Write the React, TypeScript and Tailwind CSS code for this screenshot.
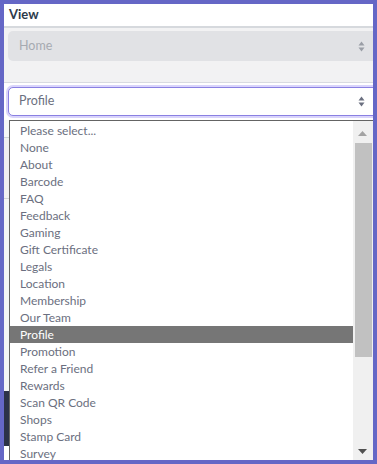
import React from "react"

const options = [
  "Please select...",
  "None",
  "About",
  "Barcode",
  "FAQ",
  "Feedback",
  "Gaming",
  "Gift Certificate",
  "Legals",
  "Location",
  "Membership",
  "Our Team",
  "Profile",
  "Promotion",
  "Refer a Friend",
  "Rewards",
  "Scan QR Code",
  "Shops",
  "Stamp Card",
  "Survey",
]

function SortIcon({ color }: { color: string }) {
  return (
    <svg width="7" height="11" viewBox="0 0 7 11" className="shrink-0">
      <path d="M3.5 0.5 L6.5 4.5 H0.5 Z" fill={color} />
      <path d="M3.5 10.5 L6.5 6.5 H0.5 Z" fill={color} />
    </svg>
  )
}

export default function App() {
  const selected = "Profile"

  return (
    <div
      className="w-[377px] h-[464px] bg-[#6567c6] p-[4px]"
      style={{ fontFamily: "Lato, 'Noto Sans', sans-serif" }}
    >
      <div className="relative w-full h-full bg-white overflow-hidden">
        <div className="h-[22px] px-[5px] flex items-center text-[13px] font-bold text-[#2d3a4b]">
          View
        </div>
        <div className="border-t-2 border-[#d6d9dd] bg-[#f2f2f3] h-[56px] pt-[3px] pl-[4px]">
          <div className="w-[380px] h-[30px] rounded-[5px] bg-[#e1e2e5] flex items-center justify-between pl-[11px] pr-[23px] text-[12.5px] text-[#a6aab1]">
            <span>Home</span>
            <SortIcon color="#9a9ea6" />
          </div>
        </div>
        <div className="border-t border-[#d8dae0] pt-[4px] pl-[4px] pb-[4px]">
          <div className="w-[380px] h-[29px] rounded-[5px] bg-white border border-[#8a80e2] shadow-[0_0_0_2px_#d9d4fb] flex items-center justify-between pl-[10px] pr-[22px] text-[12.5px] text-[#6b6f80]">
            <span>{selected}</span>
            <SortIcon color="#6b7080" />
          </div>
        </div>

        {/* page content behind the open list */}
        <div className="h-[18px] bg-[#f7f7f7] border-b border-[#cfd2d6]" />
        <div className="h-[61px] bg-[#f0f0f1] border-b border-[#cfd2d6]" />
        <div className="h-[192px] bg-[#f4f4f5]" />
        <div className="h-[55px] bg-[#2c3247]" />
        <div className="h-[20px] bg-white" />

        {/* open option list */}
        <div className="absolute left-[5px] top-[116px] w-[370px] h-[345px] bg-white border-t border-l border-[#646464] flex">
          <ul className="w-[343px] pt-[1px] text-[12px] leading-[17px] text-[#6b6f80]">
            {options.map((o) => (
              <li
                key={o}
                className={
                  o === selected
                    ? "h-[17px] pl-[10px] bg-[#767676] text-white"
                    : "h-[17px] pl-[10px]"
                }
              >
                {o}
              </li>
            ))}
          </ul>
          <div className="relative w-[21px] h-[340px] bg-[#f0f0f0]">
            <svg width="9" height="5" viewBox="0 0 9 5" className="absolute left-[5px] top-[10px]">
              <path d="M4.5 0 L9 5 H0 Z" fill="#a3a3a3" />
            </svg>
            <div className="absolute left-[2px] top-[22px] w-[17px] h-[214px] bg-[#c1c1c1]" />
            <svg width="9" height="5" viewBox="0 0 9 5" className="absolute left-[5px] top-[328px]">
              <path d="M0 0 H9 L4.5 5 Z" fill="#505050" />
            </svg>
          </div>
        </div>
      </div>
    </div>
  )
}
